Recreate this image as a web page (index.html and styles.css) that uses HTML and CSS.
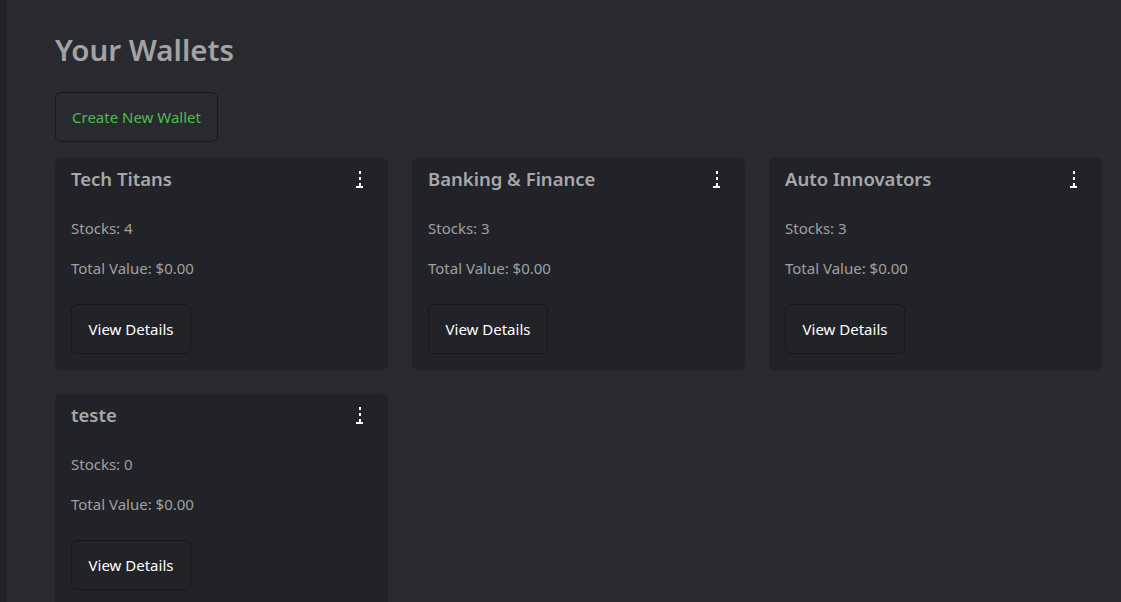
FILE: index.html
```html
<!DOCTYPE html>
<html lang="en">
<head>
<meta charset="utf-8">
<title>Your Wallets</title>
<link rel="stylesheet" href="styles.css">
</head>
<body>
<div class="app">
  <aside class="rail"></aside>
  <main class="main">
    <h1 class="page-title">Your Wallets</h1>
    <button class="btn btn-create">Create New Wallet</button>
    <div class="grid">
      <div class="card">
        <div class="card-head"><h3 class="card-title">Tech Titans</h3><a class="kebab" href="#">&#8942;</a></div>
        <p class="line">Stocks: 4</p>
        <p class="line">Total Value: $0.00</p>
        <button class="btn btn-view">View Details</button>
      </div>
      <div class="card">
        <div class="card-head"><h3 class="card-title">Banking &amp; Finance</h3><a class="kebab" href="#">&#8942;</a></div>
        <p class="line">Stocks: 3</p>
        <p class="line">Total Value: $0.00</p>
        <button class="btn btn-view">View Details</button>
      </div>
      <div class="card">
        <div class="card-head"><h3 class="card-title">Auto Innovators</h3><a class="kebab" href="#">&#8942;</a></div>
        <p class="line">Stocks: 3</p>
        <p class="line">Total Value: $0.00</p>
        <button class="btn btn-view">View Details</button>
      </div>
      <div class="card">
        <div class="card-head"><h3 class="card-title">teste</h3><a class="kebab" href="#">&#8942;</a></div>
        <p class="line">Stocks: 0</p>
        <p class="line">Total Value: $0.00</p>
        <button class="btn btn-view">View Details</button>
      </div>
    </div>
  </main>
</div>
</body>
</html>
```
FILE: styles.css
```css
html, body {
  margin: 0;
  padding: 0;
  height: 100%;
  background: #282a2f;
  font-family: "Noto Sans", "Open Sans", sans-serif;
  overflow: hidden;
}
.app {
  display: flex;
  min-height: 100%;
}
.rail {
  width: 7px;
  flex: none;
  background: #212327;
}
.main {
  flex: 1;
  padding: 28px 19px 0 48px;
}
.page-title {
  margin: 0 0 20px;
  font-size: 29.5px;
  line-height: 44px;
  font-weight: 600;
  color: #a3a3a3;
}
.btn {
  font-family: inherit;
  font-size: 15px;
  line-height: 20px;
  border: 1px solid #16181b;
  border-radius: 6px;
  background: transparent;
  padding: 14px 16px;
  cursor: pointer;
}
.btn-create {
  color: #4ebd4e;
  height: 50px;
  margin-bottom: 16px;
}
.grid {
  display: grid;
  grid-template-columns: repeat(3, 333px);
  column-gap: 24px;
  row-gap: 24px;
}
.card {
  background: #212328;
  border-radius: 5px;
  padding: 8px 16px 16px;
  display: flex;
  flex-direction: column;
  align-items: flex-start;
}
.card-head {
  align-self: stretch;
  display: flex;
  justify-content: space-between;
  align-items: flex-start;
}
.card-title {
  margin: 0;
  font-size: 18.5px;
  line-height: 26px;
  font-weight: 600;
  color: #a8a8a8;
}
.kebab {
  display: block;
  position: relative;
  width: 7px;
  height: 19px;
  margin: 3px 9px 0 0;
  overflow: hidden;
  color: transparent;
  font-size: 1px;
  text-decoration: none;
  border-bottom: 2px solid #ffffff;
  box-sizing: border-box;
}
.kebab::before {
  content: "";
  position: absolute;
  left: 2.5px;
  top: 2px;
  width: 2.5px;
  height: 2.5px;
  background: #ffffff;
  box-shadow: 0 6px 0 #ffffff, 0 12px 0 #ffffff;
}
.line {
  margin: 0;
  padding-top: 24px;
  font-size: 15px;
  line-height: 24px;
  color: #a0a0a0;
}
.line + .line {
  padding-top: 16px;
}
.btn-view {
  margin-top: 24px;
  width: 120px;
  height: 50px;
  color: #ffffff;
}
```
